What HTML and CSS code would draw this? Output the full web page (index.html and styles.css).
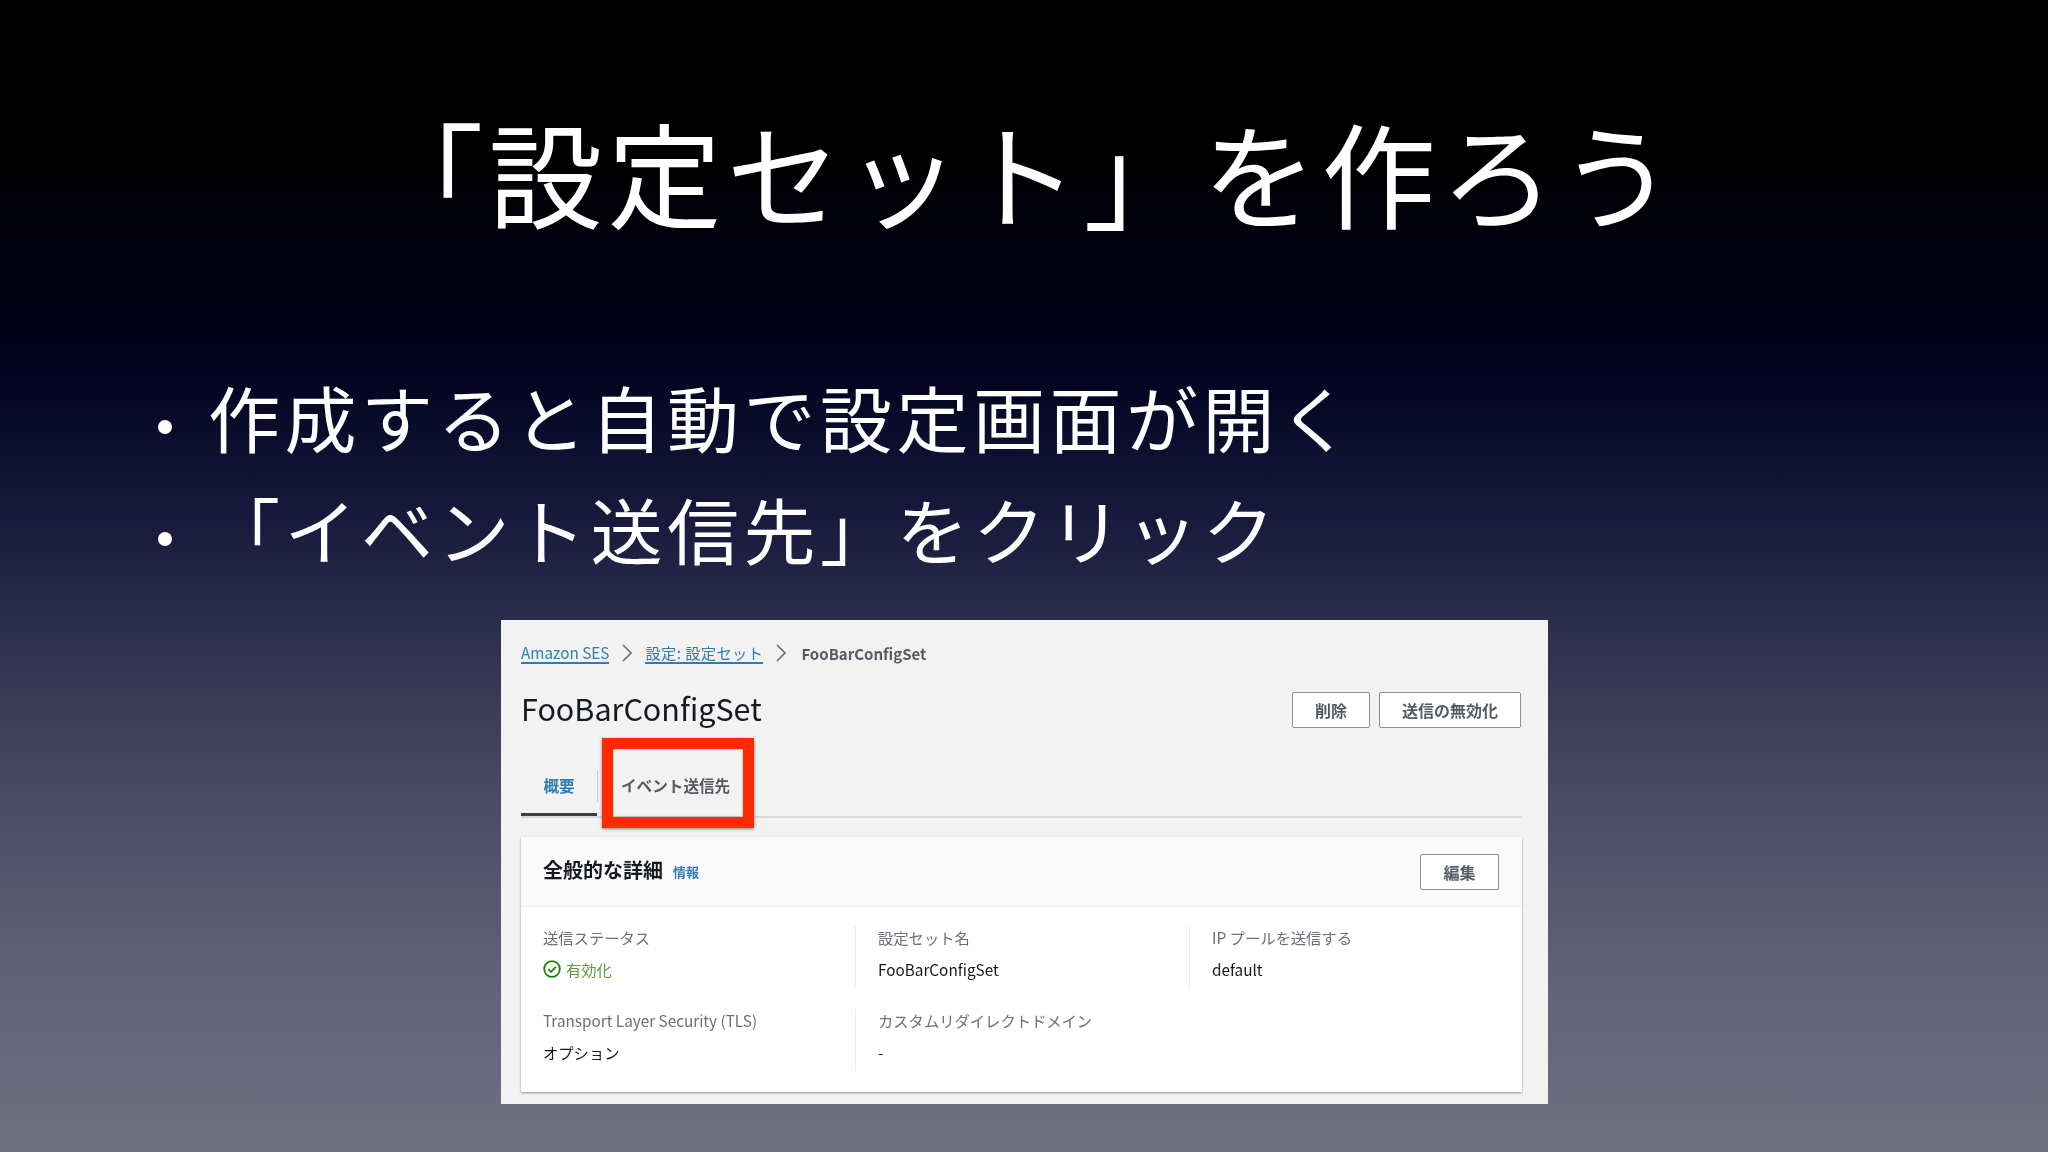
FILE: index.html
```html
<!DOCTYPE html>
<html lang="ja">
<head>
    <meta charset="UTF-8">
    <title>設定セットを作ろう</title>
    <link rel="stylesheet" href="styles.css">
</head>
<body>

<div class="slide">
    <h1 class="slide-title">「設定セット」を作ろう</h1>

    <ul class="points">
        <li>作成すると自動で設定画面が開く</li>
        <li>「イベント送信先」をクリック</li>
    </ul>

    <div class="shot">
        <div class="crumbs">
            <a class="crumb-link">Amazon SES</a>
            <svg class="chevron" viewBox="0 0 12 18"><path d="M2 1l8 8-8 8"/></svg>
            <a class="crumb-link crumb-wide">設定: 設定セット</a>
            <svg class="chevron" viewBox="0 0 12 18"><path d="M2 1l8 8-8 8"/></svg>
            <span class="crumb-current">FooBarConfigSet</span>
        </div>

        <div class="page-head">
            <h2>FooBarConfigSet</h2>
            <div class="actions">
                <button class="btn btn-delete">削除</button>
                <button class="btn btn-disable">送信の無効化</button>
            </div>
        </div>

        <div class="tabs">
            <div class="tab tab-active">概要</div>
            <div class="tab-divider"></div>
            <div class="tab tab-next">
                イベント送信先
                <span class="highlight"></span>
            </div>
        </div>

        <div class="card">
            <div class="card-head">
                <h3>全般的な詳細</h3>
                <a class="info">情報</a>
                <button class="btn btn-edit">編集</button>
            </div>
            <div class="card-body">
                <div class="field">
                    <div class="label">送信ステータス</div>
                    <div class="value status">
                        <svg class="check" viewBox="0 0 18 18"><circle cx="9" cy="9" r="7.8"/><path d="M5.3 9.2l2.7 2.7 4.8-5"/></svg>
                        有効化
                    </div>
                </div>
                <div class="field">
                    <div class="label">設定セット名</div>
                    <div class="value">FooBarConfigSet</div>
                </div>
                <div class="field">
                    <div class="label">IP プールを送信する</div>
                    <div class="value">default</div>
                </div>
                <div class="field">
                    <div class="label">Transport Layer Security (TLS)</div>
                    <div class="value">オプション</div>
                </div>
                <div class="field">
                    <div class="label">カスタムリダイレクトドメイン</div>
                    <div class="value">-</div>
                </div>
            </div>
        </div>
    </div>
</div>

</body>
</html>
```

FILE: styles.css
```css
body { margin: 0; font-family: "Noto Sans CJK JP", "Noto Sans", sans-serif; }
.slide { width: 2048px; height: 1152px; overflow: hidden; display: flex; flex-direction: column; background: linear-gradient(180deg, #000 0, #000 150px, #02021f 367px, #18183c 514px, #343452 661px, #4c4c66 808px, #5e5e76 955px, #707084 1152px); color: #fff; }
.slide-title { margin: 101px 0 0; font-size: 114px; line-height: 140px; font-weight: 400; letter-spacing: 5px; text-align: center; white-space: nowrap; }
.points { list-style: none; margin: 119px 0 0; padding: 0 0 0 158px; font-size: 72px; line-height: 112px; }
.points li { display: flex; align-items: center; gap: 36px; letter-spacing: 4.5px; white-space: nowrap; }
.points li::before { content: ""; width: 14px; height: 14px; margin-top: 22px; border-radius: 50%; background: #fff; }

.shot { align-self: flex-start; width: 1047px; height: 484px; margin: 36px 0 0 501px; padding: 20px 26px 11px 20px; box-sizing: border-box; display: flex; flex-direction: column; background: #f2f2f2; color: #16191f; filter: blur(.4px); }
.crumbs { display: flex; align-items: center; gap: 12px; height: 26px; font-size: 15.3px; }
.crumb-link { color: #2f7cb0; border-bottom: 2px solid #2f7cb0; line-height: 20px; }
.crumb-wide { letter-spacing: .35px; }
.crumb-current { margin-left: 2px; color: #545b64; font-weight: 700; font-size: 15px; }
.chevron { width: 12px; height: 18px; fill: none; stroke: #687078; stroke-width: 1.7; }

.page-head { display: flex; justify-content: space-between; align-items: center; height: 46px; margin-top: 21px; }
.page-head h2 { margin: 0 0 4px; font-size: 30.5px; line-height: 46px; font-weight: 400; }
.actions { display: flex; gap: 9px; margin-right: 1px; }
.btn { height: 36px; padding: 0; background: #fff; border: 1.5px solid #8a9299; border-radius: 2px; color: #545b64; font-family: inherit; font-size: 16px; font-weight: 700; }
.btn-delete { width: 78px; }
.btn-disable { width: 142px; }
.btn-edit { width: 79px; margin-left: auto; }

.tabs { display: flex; height: 76px; margin-top: 7px; border-bottom: 2px solid #d5dbdb; font-size: 15.6px; font-weight: 700; }
.tab { display: flex; align-items: center; height: 60px; margin-top: 16px; }
.tab-active { width: 76px; justify-content: center; box-sizing: border-box; border-bottom: 3px solid #3b4045; color: #2f7cb0; }
.tab-divider { width: 1px; height: 32px; margin-top: 30px; background: #c8cccc; }
.tab-next { position: relative; margin-left: 23px; padding-bottom: 2px; height: 58px; color: #545b64; }
.highlight { position: absolute; left: -19px; top: -18px; width: 130px; height: 68px; border: 11px solid #ff2a00; box-shadow: 0 1px 3px rgba(0, 0, 0, .45), inset 0 0 2px rgba(0, 0, 0, .4); }

.card { margin: 19px 0 0 0; height: 255px; background: #fff; box-shadow: 0 1px 2px rgba(0, 0, 0, .4); }
.card-head { display: flex; align-items: center; height: 70px; padding: 0 23px 0 22px; box-sizing: border-box; background: #fafafa; border-bottom: 1px solid #eaeded; }
.card-head h3 { margin: 0 0 4px; font-size: 20px; font-weight: 700; }
.info { margin-left: 10px; color: #2f7cb0; font-size: 13px; font-weight: 700; }
.card-body { display: grid; grid-template-columns: 334px 334px 1fr; grid-auto-rows: 62px; row-gap: 21px; padding: 19px 0 0 0; }
.field { padding-left: 22px; border-left: 1px solid #eaeded; }
.field:nth-child(3n+1) { border-left: 0; }
.label { height: 32px; line-height: 22px; font-size: 15.3px; color: #687078; }
.value { line-height: 22px; font-size: 15.3px; }
.status { display: flex; align-items: center; gap: 5px; color: #5a9a3c; }
.check { width: 18px; height: 18px; fill: none; stroke: #1d8102; stroke-width: 1.8; }
```
